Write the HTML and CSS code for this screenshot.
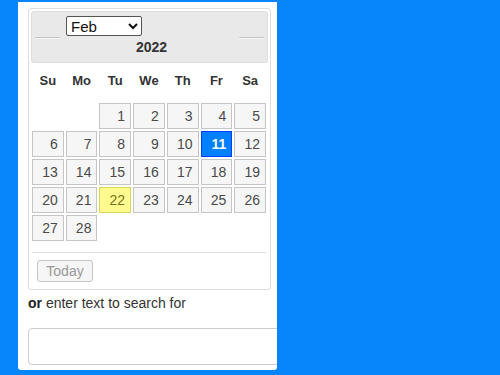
FILE: index.html
```html
<!DOCTYPE html>
<html lang="en">
<head>
    <meta charset="UTF-8">
    <meta name="viewport" content="width=device-width, initial-scale=1.0">
    <title>Date search</title>
    <link rel="stylesheet" href="styles.css">
</head>
<body>
    <div class="panel">
        <div class="datepicker">
            <div class="dp-header">
                <a class="dp-prev" title="Prev"></a>
                <a class="dp-next" title="Next"></a>
                <select class="dp-month">
                    <option>Jan</option>
                    <option selected>Feb</option>
                    <option>Mar</option>
                    <option>Apr</option>
                    <option>May</option>
                    <option>Jun</option>
                    <option>Jul</option>
                    <option>Aug</option>
                    <option>Sep</option>
                    <option>Oct</option>
                    <option>Nov</option>
                    <option>Dec</option>
                </select>
                <span class="dp-year">2022</span>
            </div>

            <div class="dp-weekdays">
                <span>Su</span><span>Mo</span><span>Tu</span><span>We</span><span>Th</span><span>Fr</span><span>Sa</span>
            </div>

            <div class="dp-days">
                <span class="empty"></span>
                <span class="empty"></span>
                <a class="day">1</a>
                <a class="day">2</a>
                <a class="day">3</a>
                <a class="day">4</a>
                <a class="day">5</a>
                <a class="day">6</a>
                <a class="day">7</a>
                <a class="day">8</a>
                <a class="day">9</a>
                <a class="day">10</a>
                <a class="day active">11</a>
                <a class="day">12</a>
                <a class="day">13</a>
                <a class="day">14</a>
                <a class="day">15</a>
                <a class="day">16</a>
                <a class="day">17</a>
                <a class="day">18</a>
                <a class="day">19</a>
                <a class="day">20</a>
                <a class="day">21</a>
                <a class="day today">22</a>
                <a class="day">23</a>
                <a class="day">24</a>
                <a class="day">25</a>
                <a class="day">26</a>
                <a class="day">27</a>
                <a class="day">28</a>
            </div>

            <div class="dp-buttons">
                <button class="dp-today">Today</button>
            </div>
        </div>

        <p class="hint"><b>or</b> enter text to search for</p>
        <input type="text" class="search-input">
    </div>
</body>
</html>
```

FILE: styles.css
```css
body { margin: 0; height: 375px; overflow: hidden; background-color: #0786fb; font-family: "Liberation Sans", Arial, sans-serif; color: #333; }
.panel { margin: 2px 0 0 18px; width: 259px; height: 368px; box-sizing: border-box; padding: 6px 0 0 10px; background-color: #fff; overflow: hidden; border-radius: 0 0 3px 3px; }

.datepicker { width: 243px; height: 282px; box-sizing: border-box; border: 1px solid #ddd; border-radius: 3px; padding: 2px; }
.dp-header {
    position: relative;
    height: 52px;
    box-sizing: border-box;
    border: 1px solid #ddd;
    border-radius: 3px;
    background-color: #e9e9e9;
    display: flex;
    flex-direction: column;
    padding-top: 4px;
}
.dp-month {
    margin-left: 34px;
    width: 76px;
    height: 20px;
    font-family: "Liberation Sans", Arial, sans-serif;
    font-size: 15px;
    color: #111;
    background-color: #fff;
    border: 1px solid #555;
    border-radius: 2px;
    padding: 0;
}
.dp-year { margin-top: 3px; text-align: center; font-weight: bold; font-size: 14px; line-height: 16px; color: #333; padding-left: 4px; }
.dp-prev,
.dp-next {
    position: absolute;
    top: 25px;
    width: 25px;
    height: 0;
    border-top: 1px solid #c4c4c4;
    border-bottom: 1px solid #f7f7f7;
    border-radius: 1px;
}
.dp-prev { left: 3px; }
.dp-next { right: 3px; }

.dp-weekdays { display: grid; grid-template-columns: repeat(7, 1fr); column-gap: 2px; width: 234px; margin-left: 1px; padding: 10px 0 14px; line-height: 16px; font-size: 13px; font-weight: bold; text-align: center; color: #333; }

.dp-days { display: grid; grid-template-columns: repeat(7, 1fr); grid-auto-rows: 26px; gap: 2px; width: 234px; margin-left: 1px; }
.day {
    box-sizing: border-box;
    border: 1px solid #c5c5c5;
    background-color: #f6f6f6;
    color: #4a4a4a;
    font-size: 14px;
    line-height: 24px;
    text-align: right;
    padding-right: 5px;
}
.day.active { background-color: #007fff; border-color: #003eff; color: #fff; font-weight: bold; }
.day.today { background-color: #fffa90; border-color: #dad55e; color: #777620; }

.dp-buttons { margin: 11px 0 0 1px; width: 234px; border-top: 1px solid #ddd; padding: 7px 0 0 5px; box-sizing: border-box; }
.dp-today {
    width: 56px;
    height: 22px;
    padding: 0;
    border: 1px solid #c5c5c5;
    border-radius: 3px;
    background-color: #f6f6f6;
    color: #999;
    font-family: "Liberation Sans", Arial, sans-serif;
    font-size: 14px;
}

.hint { margin: 5px 0 0; font-size: 14px; line-height: 16px; color: #333; }
.hint b { color: #222; }
.search-input { display: block; margin-top: 17px; width: 300px; height: 37px; box-sizing: border-box; border: 1px solid #ccc; border-radius: 4px; background: #fff; }
```
